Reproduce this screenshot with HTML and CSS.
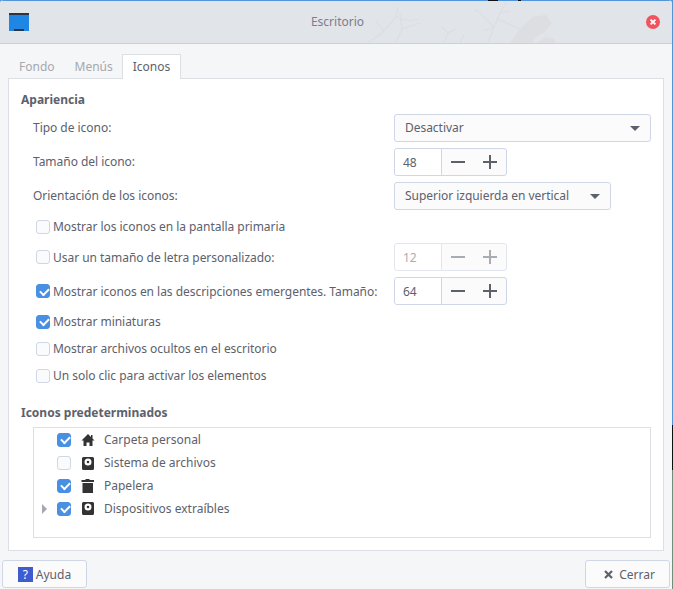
FILE: index.html
```html
<!DOCTYPE html>
<html>
  <head>
    <title>Escritorio</title>
    <link rel="stylesheet" href="styles.css">
  </head>
  <body>
    <div class="window">
      <header class="titlebar">
        <svg class="watermark" width="200" height="42" viewBox="0 0 200 42">
          <rect x="128" y="-1" width="10" height="1" fill="#111"/>
          <rect x="158" y="-1" width="3" height="1" fill="#111"/>
          <g fill="none" stroke="#dcdee2" stroke-width="1.2">
            <path d="M8 42L24 30L36 16M24 30L16 20M36 16L38 6M36 16L50 20L58 18M36 42L42 28L60 22M42 28L40 12"/>
            <path d="M84 42L88 32M88 32L82 26M88 32L96 28M100 42L104 34"/>
            <path d="M128 42L134 26L140 12L146 2M134 26L120 12L114 8M140 12L150 10M138 18L160 28M134 26L124 30"/>
          </g>
          <g fill="#dcdee2">
            <path d="M150 42L160 28L172 16L186 14L192 22L186 30L176 36L172 42Z"/>
            <path d="M176 42L186 36L194 38L196 42Z"/>
          </g>
        </svg>
        <svg class="app-icon" width="20" height="18" viewBox="0 0 20 18">
          <rect width="20" height="18" fill="#1f86e3"/>
          <rect width="20" height="2" fill="#2d3640"/>
          <rect x="5" y="16" width="10" height="2" fill="#2d3640"/>
        </svg>
        <span class="title">Escritorio</span>
        <svg class="close-icon" width="14" height="14" viewBox="0 0 14 14">
          <circle cx="7" cy="7" r="7" fill="#f2545f"/>
          <path d="M4.6 4.6l4.8 4.8M9.4 4.6l-4.8 4.8" stroke="#fff" stroke-width="2"/>
        </svg>
      </header>

      <div class="content">
        <nav class="tabs">
          <span class="tab">Fondo</span>
          <span class="tab">Menús</span>
          <span class="tab active">Iconos</span>
        </nav>

        <main class="panel">
          <h2 class="heading">Apariencia</h2>

          <div class="row control-row">
            <label class="label">Tipo de icono:</label>
            <div class="combo wide">Desactivar<i class="caret"></i></div>
          </div>
          <div class="row control-row">
            <label class="label">Tamaño del icono:</label>
            <div class="spin"><span class="spin-value">48</span><span class="spin-btn minus"></span><span class="spin-btn plus"></span></div>
          </div>
          <div class="row control-row">
            <label class="label">Orientación de los iconos:</label>
            <div class="combo medium">Superior izquierda en vertical<i class="caret"></i></div>
          </div>

          <div class="row check-row tight"><i class="check"></i>Mostrar los iconos en la pantalla primaria</div>
          <div class="row control-row tight">
            <span class="check-label"><i class="check"></i>Usar un tamaño de letra personalizado:</span>
            <div class="spin disabled"><span class="spin-value">12</span><span class="spin-btn minus"></span><span class="spin-btn plus"></span></div>
          </div>
          <div class="row control-row">
            <span class="check-label"><i class="check on"></i>Mostrar iconos en las descripciones emergentes. Tamaño:</span>
            <div class="spin"><span class="spin-value">64</span><span class="spin-btn minus"></span><span class="spin-btn plus"></span></div>
          </div>
          <div class="row check-row tight"><i class="check on"></i>Mostrar miniaturas</div>
          <div class="row check-row"><i class="check"></i>Mostrar archivos ocultos en el escritorio</div>
          <div class="row check-row"><i class="check"></i>Un solo clic para activar los elementos</div>

          <h2 class="heading second">Iconos predeterminados</h2>

          <div class="tree">
            <div class="tree-row">
              <i class="expander none"></i><i class="check on"></i>
              <svg class="tree-icon" width="14" height="14" viewBox="0 0 14 14"><path d="M7 1L0.5 7.5H2.5V13H5.5V9.5H8.5V13H11.5V7.5H13.5L11.5 5.5V2H10V4Z" fill="#333"/></svg>
              Carpeta personal
            </div>
            <div class="tree-row">
              <i class="expander none"></i><i class="check"></i>
              <svg class="tree-icon" width="14" height="14" viewBox="0 0 14 14"><path fill-rule="evenodd" d="M2.5 1H11.5Q13 1 13 2.5V12.5Q13 14 11.5 14H2.5Q1 14 1 12.5V2.5Q1 1 2.5 1ZM7 2.5A3.5 3.5 0 1 0 7 9.5A3.5 3.5 0 1 0 7 2.5ZM7 4.7A1.3 1.3 0 1 1 7 7.3A1.3 1.3 0 1 1 7 4.7Z" fill="#333"/></svg>
              Sistema de archivos
            </div>
            <div class="tree-row">
              <i class="expander none"></i><i class="check on"></i>
              <svg class="tree-icon" width="14" height="14" viewBox="0 0 14 14"><path d="M4.5 0H8.5V1H13V3H0.5V1H4.5ZM1.5 4H12V14H1.5Z" fill="#333"/></svg>
              Papelera
            </div>
            <div class="tree-row">
              <i class="expander"></i><i class="check on"></i>
              <svg class="tree-icon" width="14" height="14" viewBox="0 0 14 14"><path fill-rule="evenodd" d="M2.5 0H11.5Q13 0 13 1.5V11.5Q13 13 11.5 13H2.5Q1 13 1 11.5V1.5Q1 0 2.5 0ZM7 1.5A3.5 3.5 0 1 0 7 8.5A3.5 3.5 0 1 0 7 1.5ZM7 3.7A1.3 1.3 0 1 1 7 6.3A1.3 1.3 0 1 1 7 3.7Z" fill="#333"/></svg>
              Dispositivos extraíbles
            </div>
          </div>
        </main>

        <footer class="actions">
          <button class="btn"><span class="help-icon">?</span>Ayuda</button>
          <button class="btn close">
            <svg width="9" height="9" viewBox="0 0 9 9"><path d="M1 1l7 7M8 1l-7 7" stroke="#5c616c" stroke-width="2.2"/></svg>
            Cerrar
          </button>
        </footer>
      </div>
    </div>
  </body>
</html>
```

FILE: styles.css
```css
* {
  box-sizing: border-box;
}
html, body {
  height: 100%;
}
body {
  margin: 0;
  background: linear-gradient(#5294d8 0 425px, #111 425px 470px, #6f8f7a 470px);
  font-family: "Noto Sans", sans-serif;
  font-size: 12px;
  color: #5c616c;
  overflow: hidden;
}
.window {
  height: 589px;
  width: 672px;
  background: #f5f6f7;
  border-radius: 4px 4px 0 0;
  overflow: hidden;
}
.titlebar {
  position: relative;
  display: flex;
  align-items: center;
  justify-content: space-between;
  height: 44px;
  padding: 0 12px 1px 9px;
  background: #e1e4e9;
  border-top: 1px solid #5294d8;
  border-bottom: 1px solid #ccd0d8;
}
.watermark {
  position: absolute;
  left: 360px;
  top: 0;
  overflow: visible;
}
.title {
  position: relative;
  color: #7a7f8a;
}
.content {
  display: flex;
  flex-direction: column;
  padding: 10px 8px 2px 8px;
}
.tabs {
  display: flex;
  height: 25px;
  padding-left: 2px;
  position: relative;
  z-index: 1;
}
.tab {
  display: flex;
  align-items: center;
  padding: 0 8px 2px;
  color: #a5a8ae;
  border: 1px solid transparent;
  border-bottom: 0;
}
.tab:first-child {
  margin-right: 2px;
}
.tab.active {
  height: 25px;
  padding: 0 10px 2px;
  color: #5c616c;
  background: #fff;
  border-color: #dcdfe3;
}
.panel {
  height: 473px;
  margin-top: -1px;
  padding: 11px 12px 0 12px;
  background: #fff;
  border: 1px solid #dcdfe3;
  letter-spacing: -0.035px;
}
.heading {
  margin: 0;
  height: 18px;
  line-height: 20px;
  font-size: 12px;
  font-weight: 700;
  letter-spacing: 0;
}
.heading.second {
  margin-top: 14px;
}
.row {
  display: flex;
  align-items: center;
}
.control-row {
  height: 28px;
  margin-top: 6px;
  padding-left: 12px;
}
.control-row.tight {
  margin-top: 3px;
}
.label {
  flex: 0 0 361px;
  padding-bottom: 2px;
}
.check-label {
  display: flex;
  align-items: center;
  flex: 0 0 361px;
  padding-left: 3px;
}
.check-row {
  height: 27px;
  padding-left: 15px;
}
.check-row.tight {
  margin-top: 3px;
}
.check {
  display: inline-block;
  flex: none;
  width: 14px;
  height: 14px;
  margin-right: 3px;
  background: #fafbfc;
  border: 1px solid #cfd6e6;
  border-radius: 3px;
}
.check.on {
  background: #4a90e2;
  border-color: #4a90e2;
  position: relative;
}
.check.on::after {
  content: "";
  position: absolute;
  left: 2.5px;
  top: 2.5px;
  width: 7px;
  height: 4px;
  transform: rotate(-45deg);
  border-left: 2px solid #fff;
  border-bottom: 2px solid #fff;
}
.combo {
  display: flex;
  align-items: center;
  justify-content: space-between;
  flex: none;
  height: 28px;
  padding: 0 10px 2px;
  background: #fbfbfc;
  border: 1px solid #cfd6e6;
  border-radius: 3px;
}
.combo.wide {
  width: 257px;
}
.combo.medium {
  width: 217px;
}
.caret {
  width: 0;
  height: 0;
  margin-top: 2px;
  border-left: 5px solid transparent;
  border-right: 5px solid transparent;
  border-top: 5px solid #5c616c;
}
.spin {
  display: flex;
  flex: none;
  width: 113px;
  height: 28px;
  background: #fbfbfc;
  border: 1px solid #cfd6e6;
  border-radius: 3px;
}
.spin-value {
  flex: 0 0 47px;
  display: flex;
  align-items: center;
  padding-left: 8px;
  background: #fff;
  border-right: 1px solid #cfd6e6;
  border-radius: 3px 0 0 3px;
}
.spin-btn {
  flex: 1;
  position: relative;
}
.spin-btn::before,
.plus::after {
  content: "";
  position: absolute;
  left: 50%;
  top: 50%;
  width: 14px;
  height: 2px;
  margin: -1px 0 0 -7px;
  background: #5c616c;
}
.plus::after {
  width: 2px;
  height: 14px;
  margin: -7px 0 0 -1px;
}
.spin.disabled {
  border-color: #e3e6ee;
  color: #a9acb2;
}
.spin.disabled .spin-value {
  border-color: #e3e6ee;
}
.spin.disabled .spin-btn::before,
.spin.disabled .plus::after {
  background: #a9acb2;
}
.tree {
  height: 111px;
  margin: 6px 0 0 12px;
  width: 618px;
  background: #fff;
  border: 1px solid #dcdfe3;
  letter-spacing: 0;
}
.tree-row {
  display: flex;
  align-items: center;
  height: 23px;
  padding-left: 8px;
}
.expander {
  width: 0;
  height: 0;
  margin-right: 10px;
  border-top: 5px solid transparent;
  border-bottom: 5px solid transparent;
  border-left: 5px solid #a5a8ae;
}
.expander.none {
  border-left-color: transparent;
}
.tree-icon {
  margin: 0 9px 0 7px;
}
.actions {
  display: flex;
  justify-content: space-between;
  margin: 9px -6px 0;
}
.btn {
  display: flex;
  align-items: center;
  justify-content: center;
  gap: 3px;
  width: 85px;
  height: 28px;
  padding: 0;
  font: inherit;
  color: inherit;
  background: #fbfbfc;
  border: 1px solid #cfd6e6;
  border-radius: 3px;
}
.btn.close {
  gap: 6px;
  padding-left: 4px;
}
.help-icon {
  display: flex;
  align-items: center;
  justify-content: center;
  width: 15px;
  height: 15px;
  background: #3f5bd0;
  color: #fff;
}
```
